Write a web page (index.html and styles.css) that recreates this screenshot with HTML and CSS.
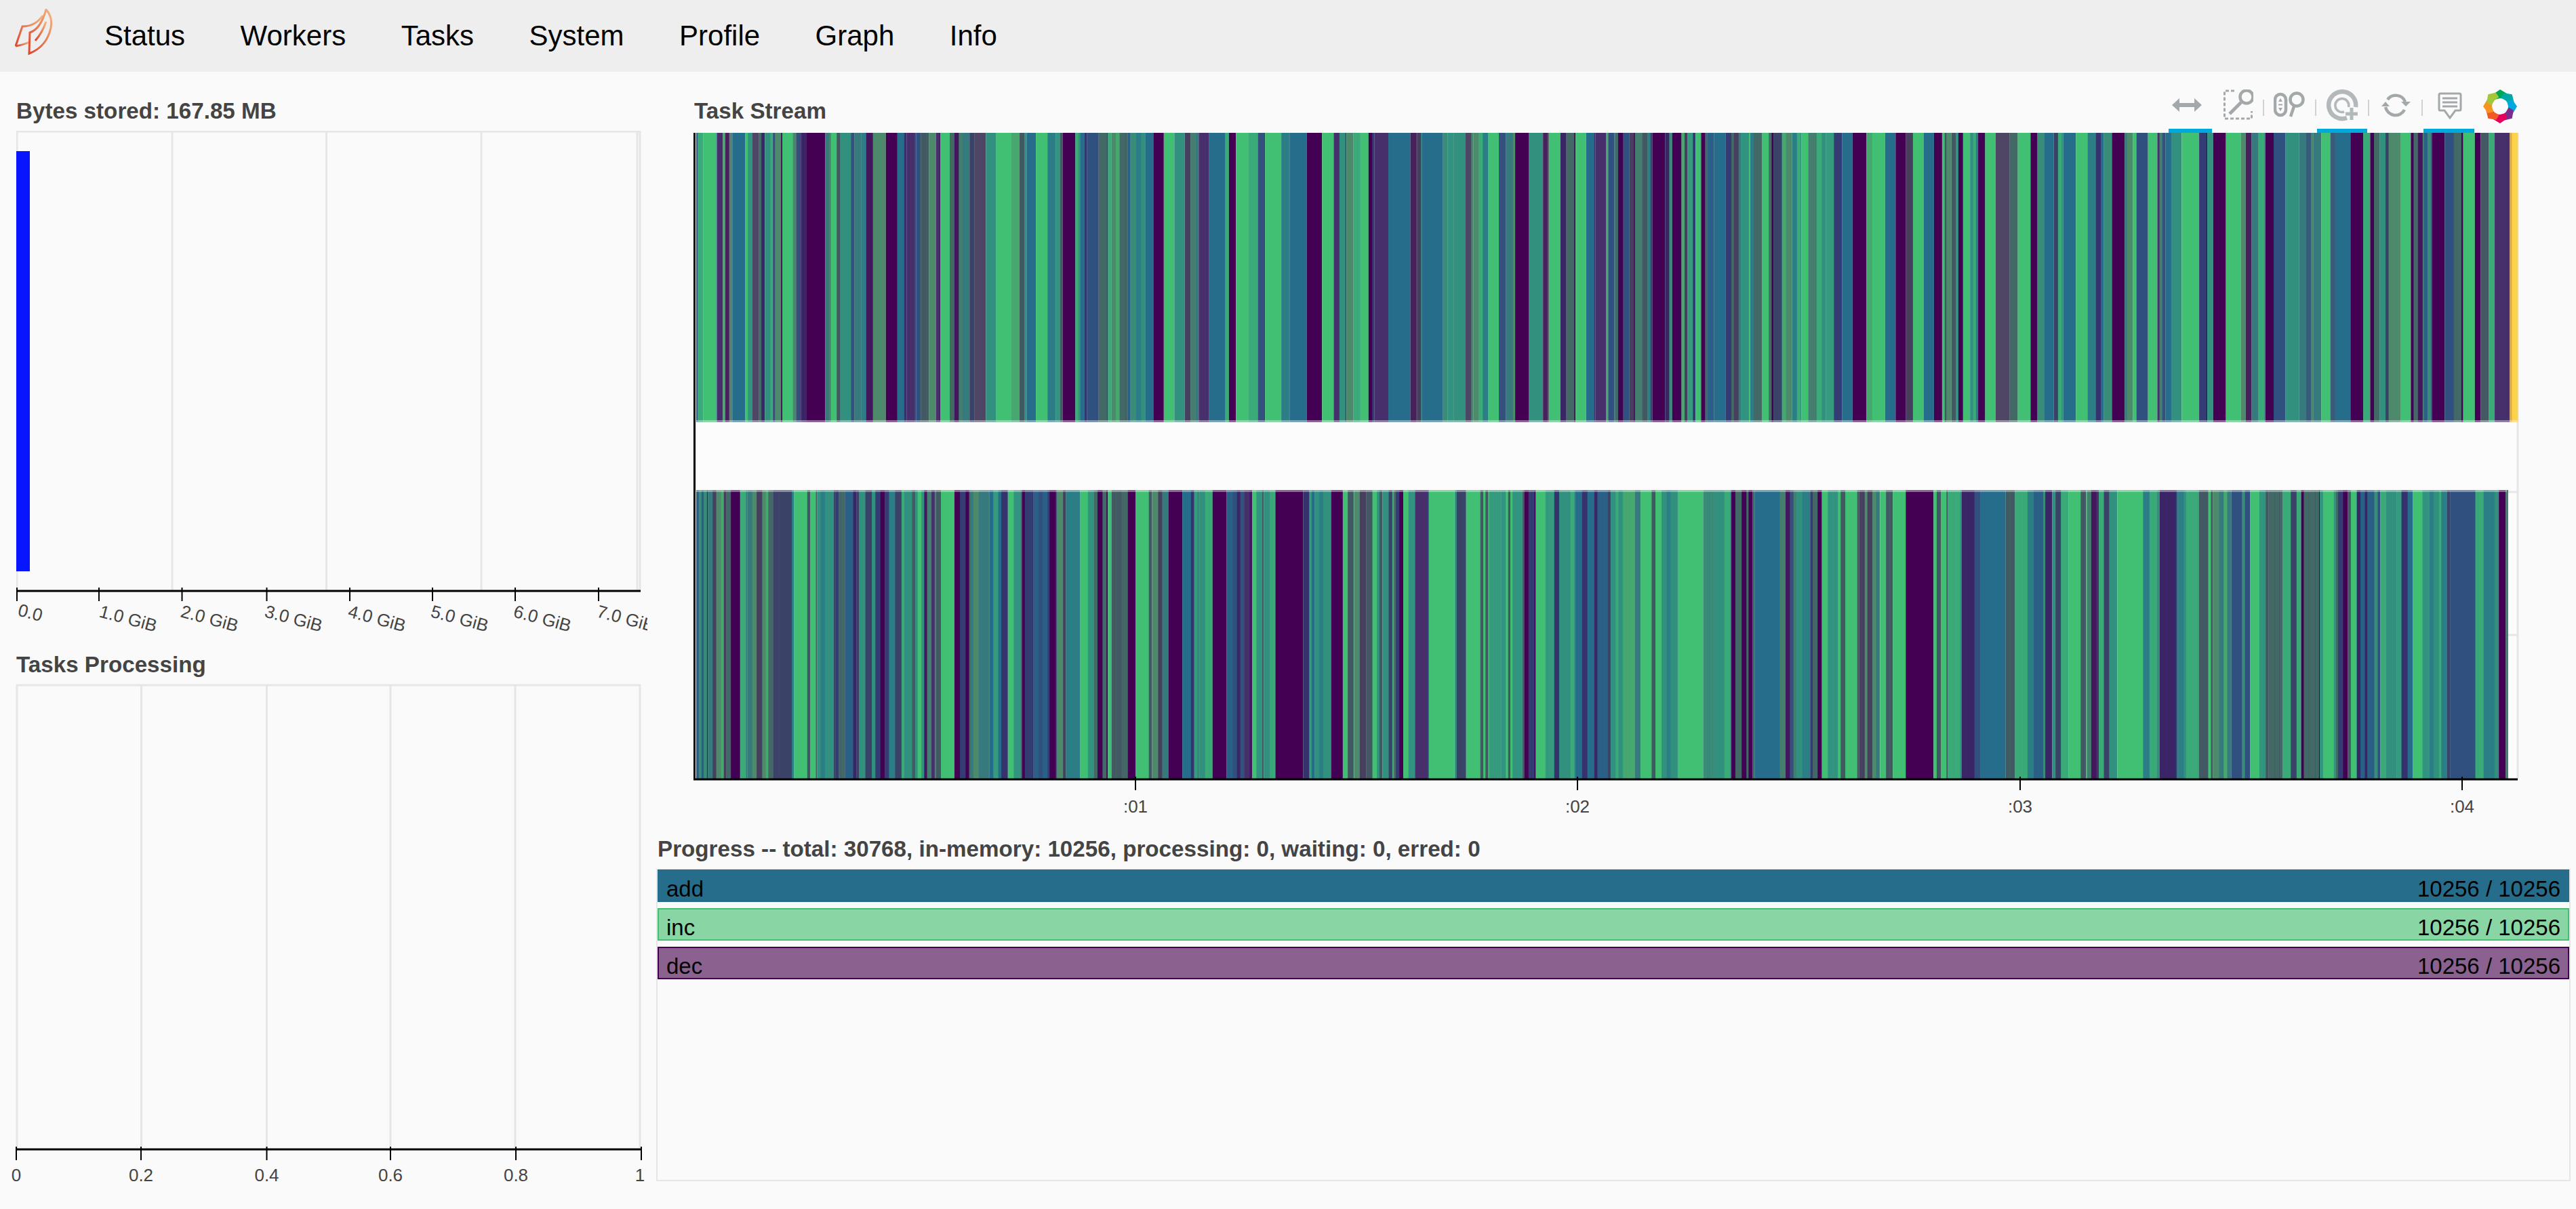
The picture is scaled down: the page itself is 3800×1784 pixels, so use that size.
FILE: index.html
```html
<!DOCTYPE html>
<html lang="en">
<head>
<meta charset="utf-8">
<title>Dask Status</title>
<link rel="stylesheet" href="styles.css">
</head>
<body>
<nav class="nav">
  <svg class="logo" width="56" height="80" viewBox="0 0 56 80">
    <defs>
      <linearGradient id="leaf" x1="0" y1="1" x2="1" y2="0">
        <stop offset="0" stop-color="#d9492f"/>
        <stop offset="0.55" stop-color="#e8825a"/>
        <stop offset="1" stop-color="#f6b67f"/>
      </linearGradient>
    </defs>
    <g fill="none" stroke="url(#leaf)" stroke-width="3" stroke-linejoin="miter">
      <path d="M1 55 L11 26 Q30 26 41 10"/>
      <path d="M1 55 Q13 53 21 49"/>
      <path d="M21 66 L22 35 Q38 30 46 1 Q56 12 53 28 Q47 56 21 66Z"/>
      <path d="M30 47 Q40 36 46 19"/>
    </g>
  </svg>
  <a class="nav-link">Status</a>
  <a class="nav-link">Workers</a>
  <a class="nav-link">Tasks</a>
  <a class="nav-link">System</a>
  <a class="nav-link">Profile</a>
  <a class="nav-link">Graph</a>
  <a class="nav-link">Info</a>
</nav>
<main class="dash">
  <section class="col-left">
    <h2 class="title">Bytes stored: 167.85 MB</h2>
    <svg class="chart chart-bytes" width="931" height="767">
      <g class="grid">
        <line x1="1" y1="0" x2="1" y2="679"/><line x1="230" y1="0" x2="230" y2="679"/>
        <line x1="457.500" y1="0" x2="457.500" y2="679"/><line x1="686" y1="0" x2="686" y2="679"/>
        <line x1="916" y1="0" x2="916" y2="679"/><line x1="920" y1="0" x2="920" y2="679"/>
        <line x1="0" y1="1" x2="921" y2="1"/>
      </g>
      <rect class="bytes-bar" x="0" y="30" width="20" height="620"/>
      <line class="axis" x1="0" y1="679" x2="921" y2="679"/>
      <g class="ticks">
        <line x1="1" y1="674" x2="1" y2="694"/><line x1="122" y1="674" x2="122" y2="694"/>
        <line x1="244.500" y1="674" x2="244.500" y2="694"/><line x1="369.500" y1="674" x2="369.500" y2="694"/>
        <line x1="492" y1="674" x2="492" y2="694"/><line x1="614" y1="674" x2="614" y2="694"/>
        <line x1="736" y1="674" x2="736" y2="694"/><line x1="859" y1="674" x2="859" y2="694"/>
      </g>
      <g class="label">
        <text x="1" y="715" transform="rotate(15 1 715)">0.0</text>
        <text x="121" y="717" transform="rotate(15 121 717)">1.0 GiB</text>
        <text x="241" y="717" transform="rotate(15 241 717)">2.0 GiB</text>
        <text x="365" y="717" transform="rotate(15 365 717)">3.0 GiB</text>
        <text x="488" y="717" transform="rotate(15 488 717)">4.0 GiB</text>
        <text x="610" y="717" transform="rotate(15 610 717)">5.0 GiB</text>
        <text x="732" y="717" transform="rotate(15 732 717)">6.0 GiB</text>
        <text x="855" y="717" transform="rotate(15 855 717)">7.0 GiB</text>
      </g>
    </svg>
    <h2 class="title">Tasks Processing</h2>
    <svg class="chart chart-open" width="931" height="751">
      <g class="grid">
        <line x1="1" y1="0" x2="1" y2="686"/><line x1="184.500" y1="0" x2="184.500" y2="686"/>
        <line x1="369.500" y1="0" x2="369.500" y2="686"/><line x1="552" y1="0" x2="552" y2="686"/>
        <line x1="736" y1="0" x2="736" y2="686"/><line x1="920" y1="0" x2="920" y2="686"/>
        <line x1="0" y1="1" x2="921" y2="1"/>
      </g>
      <line class="axis" x1="0" y1="686" x2="922" y2="686"/>
      <g class="ticks">
        <line x1="0" y1="682" x2="0" y2="702"/><line x1="184" y1="682" x2="184" y2="702"/>
        <line x1="369.500" y1="682" x2="369.500" y2="702"/><line x1="552" y1="682" x2="552" y2="702"/>
        <line x1="737" y1="682" x2="737" y2="702"/><line x1="922" y1="682" x2="922" y2="702"/>
      </g>
      <g class="label label-mid">
        <text x="0" y="733">0</text><text x="184" y="733">0.2</text><text x="369.500" y="733">0.4</text>
        <text x="552" y="733">0.6</text><text x="737" y="733">0.8</text><text x="920" y="733">1</text>
      </g>
    </svg>
  </section>
  <section class="col-right">
    <header class="stream-head">
      <h2 class="title title-stream">Task Stream</h2>
      <div class="toolbar">
        <div class="tool tool-pan tool-active">
          <svg width="48" height="48" viewBox="0 0 48 48"><path class="ico-fill" d="M2 23 L13 13 V20 H35 V13 L46 23 L35 33 V26 H13 V33 Z"/></svg>
        </div>
        <div class="tool tool-box">
          <svg width="48" height="48" viewBox="0 0 48 48">
            <path class="ico-dash" d="M20 2 H5.500 V43 H45.500 V32"/>
            <circle class="ico-line ico-thick" cx="38" cy="11" r="9.500"/>
            <path class="ico-line ico-thicker" d="M30 19 L13 36"/>
          </svg>
        </div>
        <span class="sep"></span>
        <div class="tool">
          <svg width="48" height="48" viewBox="0 0 48 48">
            <rect class="ico-line ico-thick" x="2" y="7" width="16" height="31" rx="8"/>
            <path class="ico-fill" d="M10 13 L13 18 H7Z M10 32 L13 27 H7Z"/>
            <rect class="ico-fill" x="7" y="21.500" width="6" height="2"/>
            <circle class="ico-line ico-thick" cx="34" cy="15" r="9.500"/>
            <path class="ico-line ico-thick" d="M30 25 L25 40"/>
          </svg>
        </div>
        <span class="sep"></span>
        <div class="tool tool-wheel tool-active">
          <svg width="48" height="48" viewBox="0 0 48 48">
            <path class="ico-soft ico-wide" d="M31 42 A20 20 0 1 1 44 26"/>
            <path class="ico-soft ico-mid" d="M27 33 A10 10 0 1 1 33.500 26"/>
            <path class="ico-softfill" d="M35.500 27 H40.500 V33.500 H47 V38.500 H40.500 V45 H35.500 V38.500 H29 V33.500 H35.500Z"/>
          </svg>
        </div>
        <span class="sep"></span>
        <div class="tool tool-wide">
          <svg width="48" height="48" viewBox="0 0 48 48">
            <path class="ico-line ico-thick" d="M12 15 A15 15 0 0 1 38 18"/>
            <path class="ico-fill" d="M32 18 H46 L39 25Z"/>
            <path class="ico-line ico-thick" d="M37 30 A15 15 0 0 1 9 26"/>
            <path class="ico-fill" d="M3 25 H15 L9 18Z"/>
          </svg>
        </div>
        <span class="sep"></span>
        <div class="tool tool-wide tool-active">
          <svg width="48" height="48" viewBox="0 0 48 48">
            <path class="ico-line ico-med" d="M11 6 H39 Q41 6 41 8 V29 Q41 31 39 31 H33 L25 42 L17 31 H11 Q9 31 9 29 V8 Q9 6 11 6Z"/>
            <path class="ico-line ico-med" d="M14 13 H36 M14 19 H36 M14 25 H36"/>
          </svg>
        </div>
        <div class="tool-logo">
          <svg width="50" height="50" viewBox="0 0 50 50">
            <g>
              <path class="petal p1" d="M15 7 L25 0 L35 6 L33.500 14 L25 13 L17 15Z"/>
              <path class="petal p2" d="M15 7 L25 0 L35 6 L33.500 14 L25 13 L17 15Z" transform="rotate(45 25 25)"/>
              <path class="petal p3" d="M15 7 L25 0 L35 6 L33.500 14 L25 13 L17 15Z" transform="rotate(90 25 25)"/>
              <path class="petal p4" d="M15 7 L25 0 L35 6 L33.500 14 L25 13 L17 15Z" transform="rotate(135 25 25)"/>
              <path class="petal p5" d="M15 7 L25 0 L35 6 L33.500 14 L25 13 L17 15Z" transform="rotate(180 25 25)"/>
              <path class="petal p6" d="M15 7 L25 0 L35 6 L33.500 14 L25 13 L17 15Z" transform="rotate(225 25 25)"/>
              <path class="petal p7" d="M15 7 L25 0 L35 6 L33.500 14 L25 13 L17 15Z" transform="rotate(270 25 25)"/>
              <path class="petal p8" d="M15 7 L25 0 L35 6 L33.500 14 L25 13 L17 15Z" transform="rotate(315 25 25)"/>
            </g>
          </svg>
        </div>
      </div>
    </header>
    <svg class="chart chart-stream" id="stream" width="2823" height="1036">
      <rect class="plot-bg" x="55" y="0" width="2690" height="954"/>
      <line class="grid-line" x1="2745" y1="0" x2="2745" y2="954"/>
      <line class="grid-line" x1="2729" y1="530" x2="2745" y2="530"/>
      <line class="grid-line" x1="2729" y1="741" x2="2745" y2="741"/>
      <g id="rows"></g>
      <line class="axis" x1="55.500" y1="0" x2="55.500" y2="954"/>
      <line class="axis" x1="54" y1="954" x2="2745" y2="954"/>
      <g class="ticks">
        <line x1="706" y1="950" x2="706" y2="970"/><line x1="1358" y1="950" x2="1358" y2="970"/>
        <line x1="2011" y1="950" x2="2011" y2="970"/><line x1="2663" y1="950" x2="2663" y2="970"/>
      </g>
      <g class="label label-mid">
        <text x="706" y="1003">:01</text><text x="1358" y="1003">:02</text>
        <text x="2011" y="1003">:03</text><text x="2663" y="1003">:04</text>
      </g>
    </svg>
    <h2 class="title title-progress">Progress -- total: 30768, in-memory: 10256, processing: 0, waiting: 0, erred: 0</h2>
    <div class="progress">
      <div class="bar bar-add"><span>add</span><span>10256 / 10256</span></div>
      <div class="bar bar-inc"><span>inc</span><span>10256 / 10256</span></div>
      <div class="bar bar-dec"><span>dec</span><span>10256 / 10256</span></div>
    </div>
  </section>
</main>
<script src="script.js"></script>
</body>
</html>
```
FILE: styles.css
```css
* { box-sizing: border-box; }
html, body { margin: 0; height: 100%; }
body {
  background: #fafafa;
  font-family: "Liberation Sans", Arial, sans-serif;
  color: #000;
  overflow: hidden;
}
.nav {
  display: flex;
  align-items: center;
  height: 106px;
  padding-left: 22px;
  background: #eee;
}
.logo { flex: none; margin-right: 76px; }
.nav-link { font-size: 42px; margin-right: 81.500px; line-height: 1; }

.dash {
  display: grid;
  grid-template-columns: 945px 1fr;
  padding: 37px 8px 0 24px;
}
.title {
  margin: 0 0 10px;
  padding-top: 1px;
  height: 40px;
  font-size: 33.200px;
  line-height: 40px;
  font-weight: 700;
  color: #444;
}
.chart { display: block; }
.chart-open { overflow: visible; }
.grid line, .grid-line { stroke: #e6e6e6; stroke-width: 3; }
.axis { stroke: #000; stroke-width: 3; }
.ticks line { stroke: #000; stroke-width: 2; }
.bytes-bar { fill: #0716ff; }
.label text {
  font-family: "Liberation Sans", Arial, sans-serif;
  font-size: 26px;
  fill: #444;
}
.label-mid text { text-anchor: middle; }

.stream-head {
  display: flex;
  justify-content: space-between;
  height: 64px;
  margin-top: -11px;
  padding: 0 79px 0 55px;
}
.title-stream { margin-top: 11px; }
.toolbar { display: flex; }
.tool {
  display: flex;
  justify-content: center;
  width: 73px;
  height: 64px;
  border-bottom: 6px solid transparent;
}
.tool-pan { width: 64px; padding-right: 10px; }
.tool-box { width: 74px; }
.tool-wheel { width: 74px; }
.tool-wide { width: 75px; }
.tool-active { border-bottom-color: #00a8dc; }
.tool-logo {
  display: flex;
  justify-content: flex-end;
  width: 63px;
}
.sep {
  width: 2px;
  height: 24px;
  margin: 15px 1px 0;
  background: #cfd1d2;
}
.ico-fill { fill: #a3a8aa; }
.ico-softfill { fill: #b3b8ba; }
.ico-line, .ico-soft, .ico-dash { fill: none; stroke: #a3a8aa; }
.ico-soft { stroke: #b3b8ba; }
.ico-thick { stroke-width: 4.500px; }
.ico-thicker { stroke-width: 5px; }
.ico-med { stroke-width: 3px; }
.ico-wide { stroke-width: 6.500px; }
.ico-mid { stroke-width: 3.500px; }
.ico-dash { stroke-width: 3px; stroke-dasharray: 5 3; }
.p1 { fill: #00a651; } .p2 { fill: #00a9a5; } .p3 { fill: #00a8e0; } .p4 { fill: #7b2d8e; }
.p5 { fill: #e6005c; } .p6 { fill: #f15a24; } .p7 { fill: #f7941e; } .p8 { fill: #a4c639; }

.plot-bg { fill: #fcfcfc; }
.s-pu { fill: #440154; }
.s-mp { fill: #462f6a; }
.s-bl { fill: #266d8c; }
.s-db { fill: #30507f; }
.s-te { fill: #32907f; }
.s-gr { fill: #41c073; }
.s-gg { fill: #4d8a6c; }
.s-mg { fill: #4f4565; }
.s-ye { fill: #fdd34a; }
.s-or { fill: #e0a83e; }
.o-pu { fill: #440154; opacity: 0.55; }
.o-bl { fill: #266d8c; opacity: 0.55; }
.o-gr { fill: #41c073; opacity: 0.55; }
.edge { fill: #fafafa; opacity: 0.4; }

.title-progress { margin-left: 1px; }
.progress {
  display: flex;
  flex-direction: column;
  gap: 9px;
  height: 461px;
  margin-left: -1px;
  border: solid #e6e6e6;
  border-width: 1px 2px 2px;
}
.bar {
  display: flex;
  justify-content: space-between;
  height: 48px;
  padding: 9px 11px 0;
  border: 2px solid;
  font-size: 33px;
  line-height: 35px;
  color: #000;
}
.bar-add { background: #266d8c; border-color: #266d8c; }
.bar-inc { background: #89d5a4; border-color: #41c073; }
.bar-dec { background: #8a618f; border-color: #440154; }
```
FILE: script.js
```js
var COLORS = { P: 'pu', p: 'mp', B: 'bl', b: 'db', T: 'te', G: 'gr', g: 'gg', M: 'mg', Y: 'ye', O: 'or' };
var ROWS = [
  { x: 58, scale: 0.858, y: 0, h: 427, keep: 18, maxW: 11, d: '3b 12T 34G 36T 46p 50g 58M 62g 84B 96G 108M 112P 118b 132T 136p 146g 148P 166G 172M 180p 190b 222P 232g 248G 266T 272p 284g 292T 304p 326g 346P 362B 378p 386b 400G 412g 420p 436G 444P 458p 470g 478T 498M 516T 542G 556g 568G 584B 604G 618T 630G 652P 660T 672B 692b 708P 714T 728g 742P 756b 772T 786B 804P 822G 840T 850g 858p 864g 882p 910B 916T 928P 950G 966T 978p 1006G 1020T 1050B 1076P 1096G 1106p 1118T 1130g 1142T 1156G 1166P 1190p 1228B 1240M 1248g 1284B 1292b 1302G 1322T 1336M 1346g 1362T 1380G 1392p 1408g 1432P 1456T 1466M 1486G 1496b 1512P 1530G 1546B 1568p' },
  { x: 1400, scale: 0.858, y: 0, h: 427, keep: 18, maxW: 11, d: '4g 16b 30P 40b 48g 50P 62p 72G 80T 102P 114b 130P 140g 154B 164G 174P 186b 206B 220P 232g 248G 254T 268P 280G 288P 304T 320g 336T 348G 362p 378T 392B 406P 424B 448P 458g 480G 498B 516P 528g 546G 564B 578P 586G 594g 606G 614P 626G 640T 652P 670G 694M 708P 730G 742P 754b 770B 786T 808B 828G 842T 856B 870b 892P 906g 912G 932b 948G 962p 972B 990T 1020G 1034P 1044G 1066P 1092G 1100g 1110M 1122g 1134T 1148P 1168b 1192T 1204g 1216M 1230g 1246G 1254M 1280B 1302P 1314T 1330P 1346T 1366g 1384G 1396P 1406p 1420b 1442P 1458b 1474P 1494G 1504P 1518G 1528T 1554p 1558O 1568Y' },
  { x: 58, scale: 1.7156, y: 527, h: 427, keep: 22, maxW: 7, d: '10b 26g 38P 44T 62g 66P 84T 104G 120T 128P 138b 154T 166P 186T 196G 206p 222G 236P 252g 268B 280G 290P 302b 310P 318g 330T 342G 354P 366G 378P 392G 406g 418P 432B 444T 456P 468b 478p 488G 498T 522P 532B 546T 556P 566G 576g 590G 600T 608P 618G 630p 652G 662T 682G 692B 712G 722P 730G 742B 756T 772B 784b 798T 812g 830G 844T 866G 876b 890T 910P 932B 946p 958T 968P 984G 1000G 1018g 1029G 1040G 1064P 1076G 1088T 1104b 1126B 1134G 1150T 1166b 1180T 1196G 1206p 1222T 1244G 1256T 1274b 1292T 1304G 1320g 1336b 1352G 1364P 1380T 1396P 1410G 1420P 1428G 1448b 1462T 1476B 1490G 1508T 1530b 1550T 1556P 1558p' }
];
var NS = 'http://www.w3.org/2000/svg';
var OVERLAYS = ['o-pu', 'o-bl', 'o-gr'];
var seed = 12345;
var host = document.getElementById('rows');

function random() {
  seed = (seed * 1103515245 + 12345) % 2147483648;
  return seed / 2147483648;
}

function addRect(x, y, w, h, cls) {
  var rect = document.createElementNS(NS, 'rect');
  rect.setAttribute('x', x);
  rect.setAttribute('y', y);
  rect.setAttribute('width', w);
  rect.setAttribute('height', h);
  rect.setAttribute('class', cls);
  host.appendChild(rect);
}

// Tasks overlap with partial opacity, so narrow runs read as many thin mixed stripes.
function addFineStripes(row, left, right) {
  var x = left;
  while (x < right) {
    var w = Math.min(3 + random() * row.maxW, right - x);
    if (random() < 0.7) {
      addRect(x, row.y, w, row.h, OVERLAYS[Math.floor(random() * 3)]);
    }
    x += w;
  }
}

ROWS.forEach(function (row) {
  var start = 0;
  row.d.split(' ').forEach(function (seg) {
    var end = parseInt(seg, 10);
    var letter = seg.slice(-1);
    var left = row.x + start * row.scale;
    var width = (end - start) * row.scale;
    addRect(left, row.y, width, row.h, 's-' + COLORS[letter]);
    if (end - start < row.keep && letter !== 'Y' && letter !== 'O') {
      addFineStripes(row, left, left + width);
    }
    start = end;
  });
});

addRect(58, 424, 2687, 3, 'edge');
addRect(58, 527, 2671, 3, 'edge');
```
